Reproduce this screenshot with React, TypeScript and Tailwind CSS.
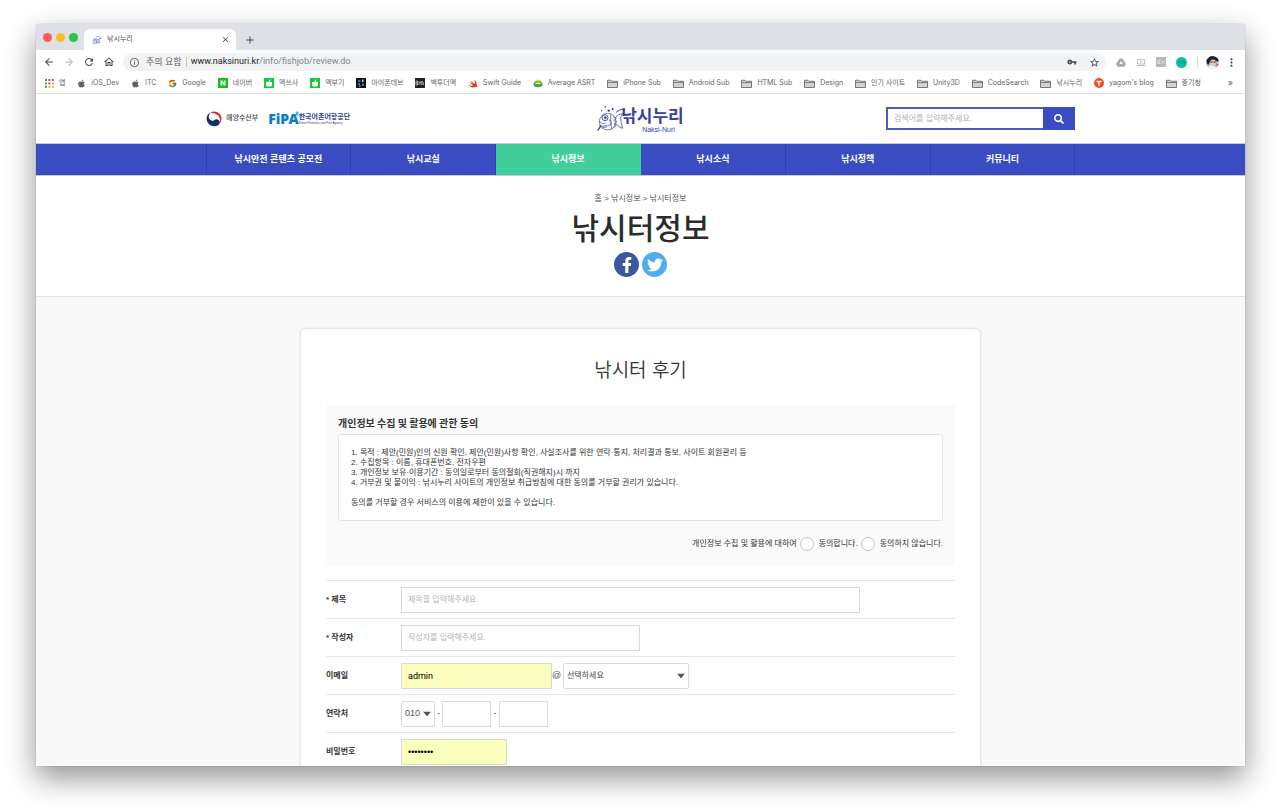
import type { ReactNode } from "react";
import { FaApple, FaFacebookF, FaSearch, FaTwitter } from "react-icons/fa";
import { FcGoogle } from "react-icons/fc";
import {
  MdAdd,
  MdArrowBack,
  MdArrowForward,
  MdClose,
  MdInfoOutline,
  MdMoreVert,
  MdOutlineHome,
  MdRefresh,
  MdStarBorder,
  MdVpnKey,
} from "react-icons/md";

function FolderIcon() {
  return (
    <svg viewBox="0 0 22 18" className="h-[9px] w-[11px]">
      <path d="M1 2.500h7l2 2h11v12.500H1z" fill="#d2d2d2" stroke="#6b6b6b" strokeWidth="1.800" />
      <path d="M1 7h20" stroke="#6b6b6b" strokeWidth="1.600" />
    </svg>
  );
}

function AppsIcon() {
  const colors = ["#e5483a", "#e5483a", "#e5483a", "#35a453", "#3f7fe8", "#f2b50f", "#35a453", "#f2b50f", "#f2b50f"];
  return (
    <svg viewBox="0 0 9 9" className="size-[9px]">
      {colors.map((color, i) => (
        <rect key={i} x={(i % 3) * 3.4} y={Math.floor(i / 3) * 3.4} width="2" height="2" fill={color} />
      ))}
    </svg>
  );
}

function NaverIcon() {
  return (
    <svg viewBox="0 0 20 20" className="size-[10px]">
      <rect width="20" height="20" fill="#12c414" />
      <path d="M5 15V5h3.600l3.200 5V5H15v10h-3.500L8.200 10v5z" fill="#fff" />
    </svg>
  );
}

function CafeIcon() {
  return (
    <svg viewBox="0 0 20 20" className="size-[10px]">
      <rect width="20" height="20" fill="#12c93c" />
      <path d="M4 8h12v6q0 3-3 3H7q-3 0-3-3z" fill="#fff" />
      <path d="M10 8c.2-2 1-4 3.500-4.500" stroke="#fff" strokeWidth="2.400" fill="none" />
    </svg>
  );
}

function DevIcon() {
  return (
    <svg viewBox="0 0 20 20" className="size-[10px]">
      <rect width="20" height="20" fill="#10131c" />
      <path d="M4 4h5v4H4zM12 11h4v5h-4z" fill="#3d6fae" />
      <path d="M12 3h3v5h-3zM4 11h4v2H4zM6 15h3v2H6z" fill="#c9c3a6" />
    </svg>
  );
}

function BackToMacIcon() {
  return (
    <svg viewBox="0 0 20 20" className="size-[10px]">
      <rect width="20" height="20" fill="#222" />
      <path d="M2 6v8h3V6zM2 10h4M8 14V7l2 3 2-3v7M14 14V6l3 4v4" stroke="#cfcfcf" strokeWidth="1.400" fill="none" />
    </svg>
  );
}

function AsrtIcon() {
  return (
    <svg viewBox="0 0 20 20" className="size-[10px]">
      <path d="M3 8c1-6 12-7 14 0z" fill="#f1d54b" />
      <ellipse cx="10" cy="12.500" rx="9" ry="6" fill="#43a83a" />
      <path d="M3 11c4-3 10-3 14 0-4 2-10 2-14 0z" fill="#e8f5d0" />
    </svg>
  );
}

function BlogIcon() {
  return (
    <svg viewBox="0 0 20 20" className="size-[10px]">
      <circle cx="10" cy="10" r="10" fill="#f0501f" />
      <path d="M5 5.500h10v3h-3.500V15h-3V8.500H5z" fill="#fff" />
    </svg>
  );
}

function SwiftMark() {
  return (
    <svg viewBox="0 0 19 17" className="h-[9px] w-[10px]">
      <path
        d="M11.500 1c4 3 5.700 7 4.700 10.500 1.800 2 2.100 3.500 1.700 4.500-1-1.500-2.400-1.700-3.600-1.100C10 17.200 4 16 .8 11c3.500 2.200 6.700 2.600 9 1.200C6.900 10 4.300 6.800 2.600 4.200c2.200 1.900 4.400 3.500 6.200 4.600C7.300 7.200 5.700 4.900 4.900 3.500c2.500 2.300 5.400 4.700 7.900 6.200C13.500 7 13 3.700 11.500 1z"
        fill="#f4301f"
      />
    </svg>
  );
}

const apple = <FaApple className="size-[9px] text-[#5f6368]" />;
const folder = <FolderIcon />;

const bookmarks: { icon: ReactNode; label: string }[] = [
  { icon: <AppsIcon />, label: "앱" },
  { icon: apple, label: "iOS_Dev" },
  { icon: apple, label: "ITC" },
  { icon: <FcGoogle className="size-[9px]" />, label: "Google" },
  { icon: <NaverIcon />, label: "네이버" },
  { icon: <CafeIcon />, label: "맥쓰사" },
  { icon: <CafeIcon />, label: "맥부기" },
  { icon: <DevIcon />, label: "아이폰데브" },
  { icon: <BackToMacIcon />, label: "백투더맥" },
  { icon: <SwiftMark />, label: "Swift Guide" },
  { icon: <AsrtIcon />, label: "Average ASRT" },
  { icon: folder, label: "iPhone Sub" },
  { icon: folder, label: "Android Sub" },
  { icon: folder, label: "HTML Sub" },
  { icon: folder, label: "Design" },
  { icon: folder, label: "인기 사이트" },
  { icon: folder, label: "Unity3D" },
  { icon: folder, label: "CodeSearch" },
  { icon: folder, label: "낚시누리" },
  { icon: <BlogIcon />, label: "yagom's blog" },
  { icon: folder, label: "중기청" },
];

function FishFavicon() {
  return (
    <svg viewBox="0 0 20 20" className="size-[10px]" fill="none" stroke="#8791cf" strokeWidth="1.600">
      <circle cx="7" cy="12" r="5" />
      <circle cx="6" cy="10" r="1.500" />
      <path d="M11 9l4-1-1 4 2 4-5-1M8 4l8-2M1 18l3-3M16 5h3M14 7h5M5 14h6M9 9v8" />
    </svg>
  );
}

function TabStrip() {
  return (
    <div className="flex h-[26px] shrink-0 items-end bg-[#dde0e5]">
      <div className="flex h-full w-12 items-center gap-1 pl-[7px]">
        <span className="size-[9px] rounded-full bg-[#fc5b57]" />
        <span className="size-[9px] rounded-full bg-[#fdbc2e]" />
        <span className="size-[9px] rounded-full bg-[#28c840]" />
      </div>
      <div className="flex h-[21px] w-[152px] items-center gap-[5px] rounded-t-md bg-white pr-[6px] pl-2">
        <FishFavicon />
        <span className="flex-1 text-[7px] text-[#45484d]">낚시누리</span>
        <button aria-label="탭 닫기" className="text-[#45484d]">
          <MdClose className="size-[9px]" />
        </button>
      </div>
      <button aria-label="새 탭" className="flex h-[21px] w-7 items-center justify-center text-[#45484d]">
        <MdAdd className="size-3" />
      </button>
    </div>
  );
}

function Toolbar() {
  return (
    <div className="flex h-6 shrink-0 items-center bg-white pr-[7px] pl-[7px] text-[#5f6368]">
      <div className="flex gap-2">
        <button aria-label="뒤로"><MdArrowBack className="size-3 text-[#45484d]" /></button>
        <button aria-label="앞으로"><MdArrowForward className="size-3 text-[#b5b8bc]" /></button>
        <button aria-label="새로고침"><MdRefresh className="size-3 text-[#45484d]" /></button>
        <button aria-label="홈"><MdOutlineHome className="size-3 text-[#45484d]" /></button>
      </div>
      <div className="ml-2 flex h-[18px] flex-1 items-center rounded-full bg-[#f1f3f4] px-[6px]">
        <MdInfoOutline className="size-[11px]" />
        <span className="ml-[6px] text-[9px]">주의 요함</span>
        <span className="mx-1 h-[10px] w-px bg-[#c3c6ca]" />
        <span className="flex-1 font-[Roboto,sans-serif] text-[9px] text-[#80868b]">
          <span className="text-[#202124]">www.naksinuri.kr</span>/info/fishjob/review.do
        </span>
        <button aria-label="비밀번호 관리"><MdVpnKey className="size-[10px] text-[#45484d]" /></button>
        <button aria-label="북마크에 추가" className="ml-3"><MdStarBorder className="size-[11px] text-[#45484d]" /></button>
      </div>
      <div className="ml-[10px] flex items-center gap-[10px]">
        <svg viewBox="0 0 20 18" className="h-[9px] w-[10px]">
          <path d="M7 1h6l7 11-3 5.500H3L0 12z" fill="#a9a9a9" />
          <path d="M10 6l3.500 6h-7z" fill="#fff" />
        </svg>
        <svg viewBox="0 0 20 18" className="h-[9px] w-[10px]" fill="none" stroke="#b0b0b0" strokeWidth="1.600">
          <path d="M3 3h14v9H3zM1 15h18M8 7h4M10 5v4" />
        </svg>
        <svg viewBox="0 0 20 20" className="size-[10px]">
          <rect width="20" height="20" rx="2" fill="#b9b9b9" />
          <path d="M9 7H4v6h5M4 10h4M11 7l5 6M16 7l-5 6" stroke="#e8e8e8" strokeWidth="1.600" fill="none" />
        </svg>
        <svg viewBox="0 0 20 20" className="size-[11px]">
          <circle cx="10" cy="10" r="10" fill="#0bbfa5" />
          <path d="M5 13V9q2.500-3 5 0 2.500-3 5 0v4M10 9v4" stroke="#079683" strokeWidth="1.600" fill="none" />
        </svg>
      </div>
      <span className="mr-2 ml-[10px] h-3 w-px bg-[#d8dadd]" />
      <svg viewBox="0 0 24 24" className="mr-[6px] size-[13px]">
        <circle cx="12" cy="12" r="12" fill="#b9c3da" />
        <path d="M2 6Q8-2 16 1t7 9l-6-1-5-2-5 4-3 6Q-1 12 2 6z" fill="#1d2230" />
        <circle cx="13" cy="12" r="5.500" fill="#edc3ae" />
        <path d="M8 11h4M14 11h4" stroke="#1d2230" strokeWidth="2" />
        <path d="M4 21q4-5 8-3t8 3Q12 26 4 21z" fill="#f7f7f7" />
        <path d="M19 14l4 1-3 5z" fill="#ce3d50" />
      </svg>
      <button aria-label="메뉴"><MdMoreVert className="size-[13px] text-[#45484d]" /></button>
    </div>
  );
}

function BookmarksBar() {
  return (
    <div className="flex h-5 shrink-0 items-center border-b border-[#dfdfdf] bg-white pr-3 pb-px pl-[9px] text-[7px] text-[#5f6368]">
      <ul className="flex flex-1 items-center justify-between">
        {bookmarks.map((b) => (
          <li key={b.label}>
            <a href="#" className="flex items-center gap-[5px] whitespace-nowrap">
              {b.icon}
              {b.label}
            </a>
          </li>
        ))}
      </ul>
      <button aria-label="북마크 더보기" className="w-8 text-right text-[9px]">»</button>
    </div>
  );
}

function MinistryLogo() {
  return (
    <a href="#" className="flex items-center gap-1 text-[7px] font-medium text-[#444]">
      <svg viewBox="0 0 48 48" className="size-4">
        <path d="M12 5Q30-4 42 10 52 26 40 40 46 22 36 13 26 4 12 5z" fill="#d5243b" />
        <path d="M14 4Q-2 14 3 30 8 44 24 46 38 46 41 36 42 26 32 25 25 25 21 30 12 30 9 22 6 12 14 4z" fill="#12305f" />
      </svg>
      해양수산부
    </a>
  );
}

function AgencyLogo() {
  return (
    <a href="#" className="flex items-center">
      <span className="flex items-start font-['Noto_Sans'] text-[14px] leading-4 font-black text-[#0c7cc4]">
        <span>FiPA</span>
        <svg viewBox="0 0 10 12" className="-ml-1 h-[5px] w-1">
          <path d="M5 0q5 5 4 9-4 5-8 0-1-4 4-9z" fill="#3db7e8" />
        </svg>
      </span>
      <span className="flex flex-col text-[#2c4196]">
        <span className="text-[7px] leading-[8px] font-bold">한국어촌어항공단</span>
        <span className="text-[3px] leading-[4px]">Korea Fisheries and Port Agency</span>
      </span>
    </a>
  );
}

function SiteLogo() {
  return (
    <a href="#" className="flex items-center text-[#3441a0]">
      <svg viewBox="0 0 84 84" className="size-7" fill="none" stroke="currentColor" strokeWidth="2.600">
        <circle cx="32" cy="50" r="25" strokeWidth="2" />
        <circle cx="24" cy="38" r="9" />
        <circle cx="25" cy="38" r="3" fill="currentColor" />
        <path d="M8 50q8 10 18 4M6 61q12 6 24 0M16 68q10 2 20-8M42 27q-7 22 3 46M36 45q8 0 8 8t-8 8M50 36l8 4-8 6 9 5-8 6 7 5-8 6" strokeWidth="2" />
        <path d="M56 38q7-12 20-12-8 14-4 23 2 10 5 21-11-2-20-14" strokeWidth="2.200" />
        <path d="M58 22l8-6q12-6 20-3" strokeWidth="3" />
        <path d="M12 62l-6 9-4 5" strokeWidth="4" />
        <circle cx="25" cy="6" r="2.500" fill="currentColor" stroke="none" />
        <circle cx="35" cy="17" r="3.500" fill="currentColor" stroke="none" />
        <circle cx="47" cy="12" r="3" fill="currentColor" stroke="none" />
        <circle cx="14" cy="17" r="2" fill="currentColor" stroke="none" />
      </svg>
      <span className="-ml-1 flex flex-col items-center pt-1">
        <span className="text-[17px] leading-[18px] font-bold">낚시누리</span>
        <span className="pl-3 text-[7px] leading-[7px]">Naksi-Nuri</span>
      </span>
    </a>
  );
}

function SiteHeader() {
  return (
    <header className="shrink-0 bg-white px-6">
      <div className="mx-auto grid h-[49px] max-w-[869px] grid-cols-3 items-center">
        <div className="flex items-center gap-[10px]">
          <MinistryLogo />
          <AgencyLogo />
        </div>
        <div className="flex justify-center">
          <SiteLogo />
        </div>
        <form className="flex h-[23px] w-[189px] justify-self-end">
          <input
            type="search"
            aria-label="검색어"
            placeholder="검색어를 입력해주세요."
            className="min-w-0 flex-1 border-2 border-r-0 border-[#4b5cc9] px-[6px] text-[8px] outline-none placeholder:text-[#b0b0b0]"
          />
          <button type="button" aria-label="검색" className="flex w-8 items-center justify-center bg-[#3a4cc1] text-white">
            <FaSearch className="size-[10px]" />
          </button>
        </form>
      </div>
    </header>
  );
}

const menu = ["낚시안전 콘텐츠 공모전", "낚시교실", "낚시정보", "낚시소식", "낚시정책", "커뮤니티"];

function SiteNav() {
  return (
    <nav className="h-[33px] shrink-0 border-y border-[#c4c8e0] bg-[#3a4cc1] px-6">
      <ul className="mx-auto grid h-full max-w-[870px] grid-cols-6 border-l border-[#2f40aa]">
        {menu.map((item) => (
          <li key={item} className="flex">
            <a
              href="#"
              aria-current={item === "낚시정보" ? "page" : undefined}
              className="flex flex-1 items-center justify-center border-r border-[#2f40aa] text-[9px] font-bold text-white aria-[current=page]:border-[#42cd9d] aria-[current=page]:bg-[#42cd9d]"
            >
              {item}
            </a>
          </li>
        ))}
      </ul>
    </nav>
  );
}

function PageTitle() {
  return (
    <section className="flex h-[121px] shrink-0 flex-col items-center border-b border-[#e3e3e3] bg-white pt-[15px]">
      <p className="text-[8px] leading-4 text-[#555]">홈 &gt; 낚시정보 &gt; 낚시터정보</p>
      <h1 className="mb-[2px] text-[30px] leading-[43px] font-medium text-[#2b2b2b]">낚시터정보</h1>
      <div className="flex gap-[3px]">
        <a href="#" aria-label="페이스북" className="flex size-[25px] items-center justify-center rounded-full bg-[#3b579d] text-white">
          <FaFacebookF className="size-4" />
        </a>
        <a href="#" aria-label="트위터" className="flex size-[25px] items-center justify-center rounded-full bg-[#50abf1] text-white">
          <FaTwitter className="size-4" />
        </a>
      </div>
    </section>
  );
}

function Consent() {
  return (
    <section className="bg-[#fafafa] px-3 pt-[10px] pb-[14px] text-[8px] text-[#333]">
      <h3 className="font-['Noto_Sans_CJK_KR',sans-serif] text-[10px] leading-4 font-bold">개인정보 수집 및 활용에 관한 동의</h3>
      <div className="mt-[3px] rounded-[3px] border border-[#e3e3e3] bg-white px-3 pt-[13px] pb-3 leading-[10px]">
        <ol>
          <li>1. 목적 : 제안(민원)인의 신원 확인, 제안(민원)사항 확인, 사실조사를 위한 연락·통지, 처리결과 통보, 사이트 회원관리 등</li>
          <li>2. 수집항목 : 이름, 휴대폰번호, 전자우편</li>
          <li>3. 개인정보 보유·이용기간 : 동의일로부터 동의철회(직권해지)시 까지</li>
          <li>4. 거부권 및 불이익 : 낚시누리 사이트의 개인정보 취급방침에 대한 동의를 거부할 권리가 있습니다.</li>
        </ol>
        <p className="mt-[10px]">동의를 거부할 경우 서비스의 이용에 제한이 있을 수 있습니다.</p>
      </div>
      <div className="mt-[15px] flex items-center justify-end gap-[3px] leading-4">
        <span>개인정보 수집 및 활용에 대하여</span>
        <label className="flex items-center gap-[5px]">
          <input type="radio" name="agree" className="size-[14px] appearance-none rounded-full border border-[#c4c4c4] bg-white" />
          동의합니다.
        </label>
        <label className="flex items-center gap-[5px]">
          <input type="radio" name="agree" className="size-[14px] appearance-none rounded-full border border-[#c4c4c4] bg-white" />
          동의하지 않습니다.
        </label>
      </div>
    </section>
  );
}

function Row({ id, label, children }: { id: string; label: string; children: ReactNode }) {
  return (
    <div className="flex h-[38px] items-center border-t border-[#e6e6e6]">
      <label htmlFor={id} className="w-[75px] shrink-0 text-[8px] font-bold text-[#333]">
        {label}
      </label>
      <div className="flex flex-1 items-center text-[9px] text-[#555]">{children}</div>
    </div>
  );
}

function Caret() {
  return (
    <svg viewBox="0 0 8 5" className="pointer-events-none absolute top-1/2 right-1 h-[5px] w-2 -translate-y-1/2">
      <path d="M0 0h8L4 5z" fill="#555" />
    </svg>
  );
}

function ReviewForm() {
  return (
    <form className="mt-[14px]">
      <Row id="title" label="* 제목">
        <input id="title" placeholder="제목을 입력해주세요." className="h-[26px] w-[459px] border border-[#d9d9d9] px-[6px] text-[8px] placeholder:text-[#b5b5b5]" />
      </Row>
      <Row id="writer" label="* 작성자">
        <input id="writer" placeholder="작성자를 입력해주세요." className="h-[26px] w-[239px] border border-[#d9d9d9] px-[6px] text-[8px] placeholder:text-[#b5b5b5]" />
      </Row>
      <Row id="email" label="이메일">
        <input id="email" defaultValue="admin" className="h-[26px] w-[151px] border border-[#d9d9d9] bg-[#faffbd] px-[6px] font-[Roboto,sans-serif] text-[9px] text-black" />
        <span className="w-[11px]">@</span>
        <div className="relative">
          <select aria-label="이메일 도메인" className="h-[26px] w-[126px] appearance-none rounded-[2px] border border-[#d9d9d9] bg-white px-[3px] text-[8px] text-[#444]">
            <option>선택하세요</option>
          </select>
          <Caret />
        </div>
      </Row>
      <Row id="phone" label="연락처">
        <div className="relative">
          <select id="phone" className="h-[26px] w-[34px] appearance-none rounded-[3px] border border-[#d9d9d9] bg-white px-[3px] text-[9px] text-[#555]">
            <option>010</option>
          </select>
          <Caret />
        </div>
        <span className="w-[7px] text-center">-</span>
        <input aria-label="가운데 번호" className="h-[26px] w-[49px] border border-[#d9d9d9] px-1" />
        <span className="w-2 text-center">-</span>
        <input aria-label="끝 번호" className="h-[26px] w-[49px] border border-[#d9d9d9] px-1" />
      </Row>
      <Row id="password" label="비밀번호">
        <input id="password" type="password" defaultValue="12345678" className="h-[26px] w-[106px] border border-[#d9d9d9] bg-[#faffbd] px-[6px] text-[9px] text-black" />
      </Row>
    </form>
  );
}

export default function App() {
  return (
    <div className="flex h-screen flex-col bg-white pt-6 pr-[35px] pb-[46px] pl-9 font-[Inter,'Noto_Sans_CJK_KR',sans-serif]">
      <div className="flex min-h-0 flex-1 flex-col overflow-hidden rounded-t-[4px] bg-[#f9f9f9] shadow-[0_12px_30px_rgba(0,0,0,0.43),0_0_1px_rgba(0,0,0,0.5)]">
        <TabStrip />
        <Toolbar />
        <BookmarksBar />
        <div className="flex min-h-0 flex-1 flex-col overflow-hidden font-['Liberation_Sans','Noto_Sans_CJK_KR',sans-serif]">
          <SiteHeader />
          <SiteNav />
          <PageTitle />
          <main className="flex min-h-0 flex-1 justify-center px-6 pt-[31px]">
            <article className="h-max w-full max-w-[681px] rounded-md border border-[#e6e6e6] bg-white px-[25px] pt-7 pb-8 shadow-[0_0_3px_rgba(0,0,0,0.08)]">
              <h2 className="mb-5 text-center text-[19px] leading-7 font-[350] text-[#333]">낚시터 후기</h2>
              <Consent />
              <ReviewForm />
            </article>
          </main>
        </div>
      </div>
    </div>
  );
}
